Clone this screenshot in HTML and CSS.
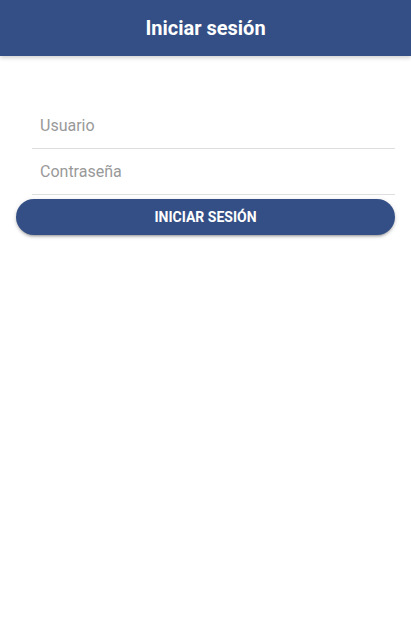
FILE: index.html
```html
<!DOCTYPE html>
<html lang="es">
<head>
<meta charset="utf-8">
<title>Iniciar sesión</title>
<link rel="stylesheet" href="styles.css">
</head>
<body>
<header class="toolbar">
  <h1 class="title">Iniciar sesión</h1>
</header>
<main class="content">
  <form class="login">
    <div class="list">
      <div class="item"><input class="field" type="text" placeholder="Usuario"></div>
      <div class="item"><input class="field" type="password" placeholder="Contraseña"></div>
    </div>
    <button class="btn" type="button">INICIAR SESIÓN</button>
  </form>
</main>
</body>
</html>
```
FILE: styles.css
```css
* { box-sizing: border-box; }
html, body { margin: 0; padding: 0; background: #fff; }
body { font-family: Roboto, "Noto Sans", sans-serif; width: 411px; height: 617px; overflow: hidden; }
.toolbar {
  height: 56px;
  background: #344f86;
  display: flex;
  align-items: center;
  justify-content: center;
  box-shadow: 0 2px 4px rgba(0,0,0,0.18);
  position: relative;
  z-index: 1;
}
.title {
  margin: 0;
  color: #fff;
  font-size: 20px;
  font-weight: 700;
  letter-spacing: 0;
}
.content { padding: 47px 16px 0 16px; }
.list { padding-left: 16px; }
.item {
  height: 46px;
  border-bottom: 1px solid #dedede;
  display: flex;
  align-items: center;
}
.field {
  border: 0;
  outline: 0;
  width: 100%;
  padding: 0 8px;
  font-family: Roboto, "Noto Sans", sans-serif;
  font-size: 16px;
  color: #333;
  background: transparent;
}
.field::placeholder { color: #999; }
.btn {
  display: block;
  width: 100%;
  height: 36px;
  margin-top: 4px;
  border: 0;
  border-radius: 18px;
  background: #344f86;
  color: #fff;
  font-family: Roboto, "Noto Sans", sans-serif;
  font-size: 14px;
  font-weight: 700;
  box-shadow: 0 3px 2px -2px rgba(0,0,0,0.2), 0 2px 3px 0 rgba(0,0,0,0.14), 0 1px 5px 0 rgba(0,0,0,0.12);
}
```
